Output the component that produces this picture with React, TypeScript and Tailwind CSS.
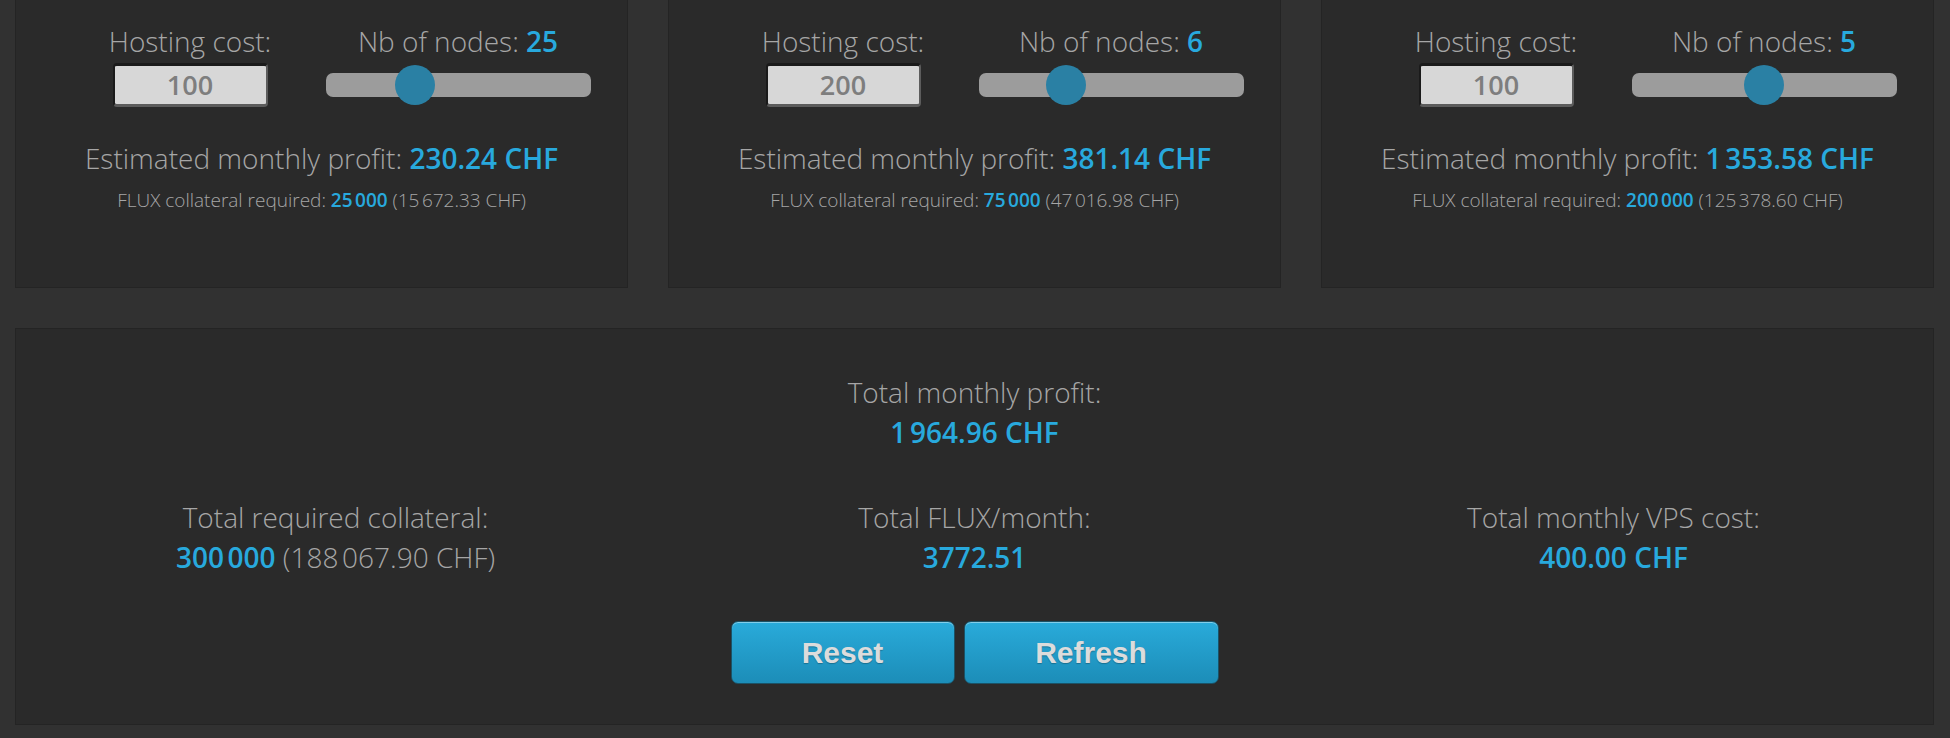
import React from "react";

const NNBSP = "\u202F";

type Node = {
  cost: string;
  nodes: string;
  thumb: number;
  profit: string;
  coll: string;
  collChf: string;
};

const nodes: Node[] = [
  { cost: "100", nodes: "25", thumb: 69, profit: "230.24 CHF", coll: `25${NNBSP}000`, collChf: `15${NNBSP}672.33 CHF` },
  { cost: "200", nodes: "6", thumb: 67, profit: "381.14 CHF", coll: `75${NNBSP}000`, collChf: `47${NNBSP}016.98 CHF` },
  { cost: "100", nodes: "5", thumb: 112, profit: `1${NNBSP}353.58 CHF`, coll: `200${NNBSP}000`, collChf: `125${NNBSP}378.60 CHF` },
];

function NodePanel({ n }: { n: Node }) {
  return (
    <div className="h-[288px] bg-[#2a2a2a] border border-t-0 border-[#242424] pt-[25px] text-[#a6a6a6]">
      <div className="flex pl-[40px]">
        <div className="w-[268px] flex flex-col items-center">
          <div className="text-[28px] leading-[32px] font-light whitespace-nowrap">Hosting cost:</div>
          <div className="mt-[6px] w-[155px] h-[44px] bg-[#d7d7d7] rounded-[4px] border-t-[3px] border-l-2 border-t-[#1a1a1a] border-l-[#1a1a1a] border-b-[3px] border-r-2 border-b-[#5c5c5c] border-r-[#5c5c5c] flex items-center justify-center text-[27px] font-semibold text-[#7e7e7e]">
            {n.cost}
          </div>
        </div>
        <div className="w-[268px] flex flex-col items-center">
          <div className="text-[28px] leading-[32px] font-light whitespace-nowrap">
            Nb of nodes: <span className="font-semibold text-[#28a9dd]">{n.nodes}</span>
          </div>
          <div className="mt-[6px] h-[44px] flex items-center">
            <div className="relative w-[265px] h-[24px] rounded-[7px] bg-[#9c9c9c]">
              <div
                className="absolute top-[-8px] w-[40px] h-[40px] rounded-full bg-[#2a80a4]"
                style={{ left: n.thumb }}
              />
            </div>
          </div>
        </div>
      </div>
      <div className="mt-[35px] text-center text-[28px] leading-[32px] font-light whitespace-nowrap">
        Estimated monthly profit: <span className="font-semibold text-[#28a9dd]">{n.profit}</span>
      </div>
      <div className="mt-[14px] text-center text-[19px] leading-[24px] font-light whitespace-nowrap">
        FLUX collateral required: <span className="font-semibold text-[#28a9dd]">{n.coll}</span> ({n.collChf})
      </div>
    </div>
  );
}

function Btn({ label, w }: { label: string; w: string }) {
  return (
    <button
      className={`${w} h-[63px] rounded-[7px] border border-[#1b5266] bg-gradient-to-b from-[#29abda] to-[#1c8db8] shadow-[inset_0_1px_0_rgba(190,230,245,0.6)] text-[#dcdcdc] text-[30px] font-bold font-['Liberation_Sans',Arial,sans-serif] [text-shadow:0_1px_1px_rgba(0,0,0,0.25)]`}
    >
      {label}
    </button>
  );
}

export default function App() {
  return (
    <div className="min-h-[738px] w-[1950px] bg-[#313131] font-['Open_Sans',sans-serif] pl-[15px] pr-[16px] pb-[13px]">
      <div className="grid grid-cols-3 gap-[40px]">
        {nodes.map((n, i) => (
          <NodePanel key={i} n={n} />
        ))}
      </div>
      <div className="mt-[40px] h-[397px] bg-[#2a2a2a] border border-[#242424] pt-[43px] text-[#a6a6a6] text-[28px] leading-[40px]">
        <div className="text-center font-light">Total monthly profit:</div>
        <div className="text-center font-semibold text-[#28a9dd]">1{NNBSP}964.96 CHF</div>
        <div className="mt-[45px] grid grid-cols-3">
          <div className="text-center">
            <div className="font-light">Total required collateral:</div>
            <div className="font-light whitespace-nowrap">
              <span className="font-semibold text-[#28a9dd]">300{NNBSP}000</span> (188{NNBSP}067.90 CHF)
            </div>
          </div>
          <div className="text-center">
            <div className="font-light">Total FLUX/month:</div>
            <div className="font-semibold text-[#28a9dd]">3772.51</div>
          </div>
          <div className="text-center">
            <div className="font-light">Total monthly VPS cost:</div>
            <div className="font-semibold text-[#28a9dd]">400.00 CHF</div>
          </div>
        </div>
        <div className="mt-[44px] flex justify-center gap-[9px]">
          <Btn label="Reset" w="w-[224px]" />
          <Btn label="Refresh" w="w-[255px]" />
        </div>
      </div>
    </div>
  );
}
